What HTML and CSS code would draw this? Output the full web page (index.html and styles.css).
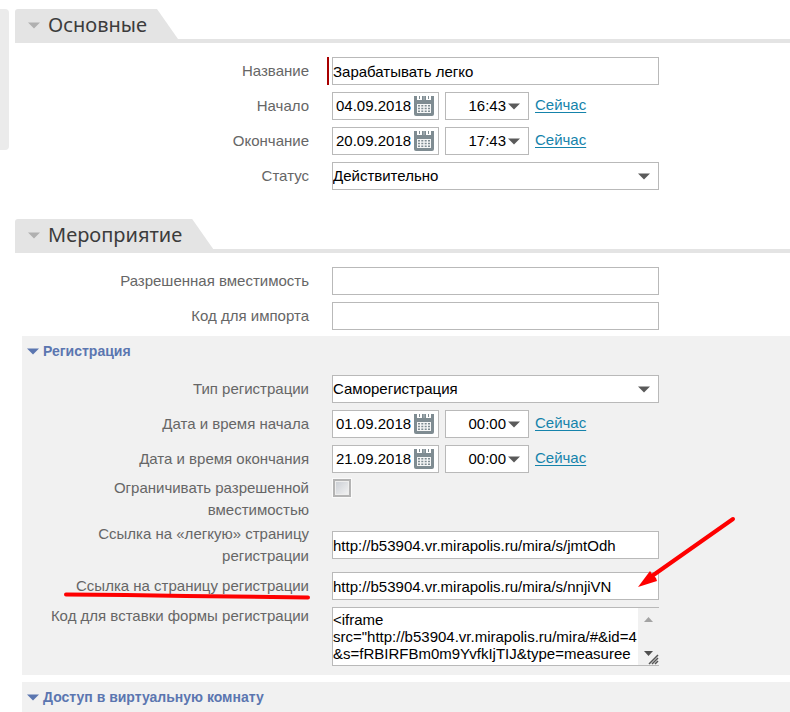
FILE: index.html
```
<!DOCTYPE html>
<html lang="ru">
<head>
<meta charset="utf-8">
<meta name="viewport" content="width=device-width, initial-scale=1">
<title>Мероприятие</title>
<link rel="stylesheet" href="styles.css">
</head>
<body>
<svg class="sprite" aria-hidden="true">
  <symbol id="arrow" viewBox="0 0 12 7"><path d="M0 .5h12L6 6.500z" fill="currentColor"/></symbol>
  <symbol id="calendar" viewBox="0 0 20 20">
    <path d="M0 0h20v18a2 2 0 0 1-2 2H2a2 2 0 0 1-2-2z" fill="#7f8c92"/>
    <path d="M3 0h5v4H3zM12 0h5v4h-5z" fill="#fff"/>
    <path d="M5 0h1v3H5zM14 0h1v3h-1z" fill="#7f8c92"/>
    <path d="M9 0h2v4H9z" fill="#9aa5aa"/>
    <path d="M3 8h14v9H3z" fill="#f6f7f7"/>
    <path d="M4 9h2v1.500H4zM7.300 9h2v1.500h-2zM10.700 9h2v1.500h-2zM14 9h2v1.500h-2zM4 11.800h2v1.500H4zM7.300 11.800h2v1.500h-2zM10.700 11.800h2v1.500h-2zM14 11.800h2v1.500h-2zM4 14.500h2V16H4zM7.300 14.500h2V16h-2zM10.700 14.500h2V16h-2zM14 14.500h2V16h-2z" fill="#7f8c92"/>
  </symbol>
</svg>
<div class="page">
  <aside class="side"></aside>
  <main class="content">
    <section class="section">
      <h2 class="section-head"><button type="button" class="tab"><svg class="arrow"><use href="#arrow"/></svg>Основные</button></h2>
      <div class="rows">
        <div class="row">
          <label for="name">Название</label>
          <div class="field required"><input id="name" class="box" type="text" value="Зарабатывать легко"></div>
        </div>
        <div class="row">
          <label for="start">Начало</label>
          <div class="field moment">
            <span class="box date"><input id="start" type="text" value="04.09.2018"><button type="button" aria-label="Календарь"><svg class="calendar"><use href="#calendar"/></svg></button></span>
            <span class="box time"><input type="text" aria-label="Время" value="16:43"><button type="button" aria-label="Выбрать время"><svg class="arrow"><use href="#arrow"/></svg></button></span>
            <a href="#">Сейчас</a>
          </div>
        </div>
        <div class="row">
          <label for="end">Окончание</label>
          <div class="field moment">
            <span class="box date"><input id="end" type="text" value="20.09.2018"><button type="button" aria-label="Календарь"><svg class="calendar"><use href="#calendar"/></svg></button></span>
            <span class="box time"><input type="text" aria-label="Время" value="17:43"><button type="button" aria-label="Выбрать время"><svg class="arrow"><use href="#arrow"/></svg></button></span>
            <a href="#">Сейчас</a>
          </div>
        </div>
        <div class="row">
          <label for="status">Статус</label>
          <div class="field"><select id="status" class="box"><option>Действительно</option></select><svg class="arrow select-arrow"><use href="#arrow"/></svg></div>
        </div>
      </div>
    </section>

    <section class="section">
      <h2 class="section-head"><button type="button" class="tab"><svg class="arrow"><use href="#arrow"/></svg>Мероприятие</button></h2>
      <div class="rows">
        <div class="row">
          <label for="capacity">Разрешенная вместимость</label>
          <div class="field"><input id="capacity" class="box" type="text"></div>
        </div>
        <div class="row">
          <label for="code">Код для импорта</label>
          <div class="field"><input id="code" class="box" type="text"></div>
        </div>
      </div>

      <div class="panel">
        <h3><button type="button" class="panel-head"><svg class="arrow"><use href="#arrow"/></svg>Регистрация</button></h3>
        <div class="row">
          <label for="type">Тип регистрации</label>
          <div class="field"><select id="type" class="box"><option>Саморегистрация</option></select><svg class="arrow select-arrow"><use href="#arrow"/></svg></div>
        </div>
        <div class="row">
          <label for="reg-start">Дата и время начала</label>
          <div class="field moment">
            <span class="box date"><input id="reg-start" type="text" value="01.09.2018"><button type="button" aria-label="Календарь"><svg class="calendar"><use href="#calendar"/></svg></button></span>
            <span class="box time"><input type="text" aria-label="Время" value="00:00"><button type="button" aria-label="Выбрать время"><svg class="arrow"><use href="#arrow"/></svg></button></span>
            <a href="#">Сейчас</a>
          </div>
        </div>
        <div class="row">
          <label for="reg-end">Дата и время окончания</label>
          <div class="field moment">
            <span class="box date"><input id="reg-end" type="text" value="21.09.2018"><button type="button" aria-label="Календарь"><svg class="calendar"><use href="#calendar"/></svg></button></span>
            <span class="box time"><input type="text" aria-label="Время" value="00:00"><button type="button" aria-label="Выбрать время"><svg class="arrow"><use href="#arrow"/></svg></button></span>
            <a href="#">Сейчас</a>
          </div>
        </div>
        <div class="row tall top">
          <label for="limit">Ограничивать разрешенной вместимостью</label>
          <div class="field"><input id="limit" class="check" type="checkbox"></div>
        </div>
        <div class="row tall">
          <label for="light-link">Ссылка на «легкую» страницу регистрации</label>
          <div class="field"><input id="light-link" class="box" type="text" value="http://b53904.vr.mirapolis.ru/mira/s/jmtOdh"></div>
        </div>
        <div class="row">
          <label for="link" class="marked">Ссылка на страницу регистрации<svg class="underline" viewBox="0 0 246 8" aria-hidden="true"><path d="M2 2.500 62 3l60 1 122 1.500" fill="none" stroke="#fe0000" stroke-width="4" stroke-linecap="round"/></svg></label>
          <div class="field"><input id="link" class="box" type="text" value="http://b53904.vr.mirapolis.ru/mira/s/nnjiVN"><svg class="pointer" viewBox="0 0 98 72" aria-hidden="true"><path d="M95 3 14 60" stroke="#fe0000" stroke-width="4" stroke-linecap="round"/><path d="M0 71 12 55l2 3 4 4 1 3z" fill="#fe0000"/></svg></div>
        </div>
        <div class="row code-row top">
          <label for="embed">Код для вставки формы регистрации</label>
          <div class="field code">
            <textarea id="embed" rows="3">&lt;iframe
src="http://b53904.vr.mirapolis.ru/mira/#&amp;id=4
&amp;s=fRBIRFBm0m9YvfkIjTIJ&amp;type=measuree</textarea>
            <svg class="scrollbar" viewBox="0 0 21 57" aria-hidden="true"><path d="M6 14h9l-4.500-5z" fill="#a3a3a3"/><path d="M6 43h9l-4.500 5z" fill="#505050"/><path d="m11 56 9-9m-6 9 6-6m-3 6 3-3" stroke="#555" stroke-width="1.500"/></svg>
          </div>
        </div>
      </div>

      <div class="panel">
        <h3><button type="button" class="panel-head"><svg class="arrow"><use href="#arrow"/></svg>Доступ в виртуальную комнату</button></h3>
      </div>
    </section>
  </main>
</div>
</body>
</html>
```
FILE: styles.css
```
* { box-sizing: border-box; }

body {
  margin: 0;
  background: #fff;
  color: #000;
  font: 15px/22px "Liberation Sans", Arial, sans-serif;
}

button, input, select, textarea { font: inherit; color: inherit; margin: 0; }
button { border: 0; padding: 0; background: none; cursor: pointer; }
h2, h3 { margin: 0; font-weight: normal; }

.sprite { display: none; }
svg { display: block; }

.page {
  display: flex;
  align-items: flex-start;
  gap: 6px;
  padding-top: 9px;
}

.side {
  flex: 0 0 9px;
  height: 141px;
  background: #ebebeb;
  border-radius: 0 4px 4px 0;
}

.content { flex: 1; min-width: 0; }

.section + .section { margin-top: 26px; }

.section-head {
  display: flex;
  height: 34px;
  border-bottom: 4px solid #e4e4e4;
}

.tab {
  display: flex;
  align-items: center;
  gap: 8px;
  height: 30px;
  padding: 2px 31px 0 13px;
  background: #e4e4e4;
  border-radius: 3px 0 0 0;
  clip-path: polygon(0 0, calc(100% - 21px) 0, 100% 100%, 0 100%);
  color: #3c3c3c;
  font: 20px/26px "Noto Sans", sans-serif;
}

.arrow { width: 12px; height: 7px; color: #5a5a5a; }
.tab .arrow { color: #b0b0b0; }

.rows { padding: 10px 0 0 7px; }

.row {
  display: grid;
  grid-template-columns: 287px minmax(0, 327px);
  column-gap: 23px;
  align-items: center;
  padding: 4px 0 3px;
}

.row label { color: #666; text-align: right; }
.row.tall { padding: 1px 0; }
.row.top { align-items: start; }
.row.code-row { padding-top: 2px; }

.field { position: relative; }

.box {
  display: block;
  width: 100%;
  height: 28px;
  padding: 0;
  border: 1px solid #b9b9b9;
  border-radius: 0;
  background: #fff;
}

select.box { appearance: none; }
.select-arrow { position: absolute; top: 11px; right: 9px; pointer-events: none; }

.required::before {
  content: "";
  position: absolute;
  top: 0;
  bottom: 0;
  left: -5px;
  width: 2px;
  background: #a80000;
}

.moment { display: flex; gap: 6px; }
.moment .box { display: flex; align-items: center; }
.moment input {
  flex: 1;
  min-width: 0;
  padding: 0;
  border: 0;
  background: none;
}
.moment .date { width: 107px; padding: 0 4px 0 3px; }
.moment .time { width: 84px; padding-right: 8px; }
.time input { text-align: right; }
.time button { margin-left: 2px; }
.calendar { width: 20px; height: 20px; }

a { color: #1583ab; line-height: 26px; text-underline-offset: 2px; }

.panel {
  margin: 3px 0 0 7px;
  padding-bottom: 6px;
  background: #f1f1f1;
}
.panel + .panel { margin-top: 7px; }

.panel-head {
  display: flex;
  align-items: center;
  gap: 4px;
  height: 35px;
  padding: 0 5px 5px;
  color: #5b76b0;
  font-size: 14px;
  font-weight: bold;
}
.panel-head .arrow { color: #5b76b0; }

.check {
  appearance: none;
  display: block;
  width: 18px;
  height: 18px;
  margin: 2px 1px;
  border: 2px solid #b4b4b4;
  background: linear-gradient(135deg, #c9cdd3, #f4f4f4);
  box-shadow: inset 0 0 0 1px #eee, 0 0 0 1px #fafafa;
}

.marked { position: relative; }
.underline { position: absolute; right: -1px; bottom: -3px; width: 246px; height: 8px; }
.pointer { position: absolute; z-index: 1; left: 306px; top: -56px; width: 98px; height: 72px; }

.code {
  display: flex;
  height: 59px;
  margin-top: 2px;
  border: 1px solid #b9b9b9;
  border-right: 0;
  background: #fff;
}
.code textarea {
  flex: 1;
  min-width: 0;
  padding: 3px 0 0;
  border: 0;
  background: none;
  line-height: 17px;
  white-space: pre;
  overflow: hidden;
  resize: none;
}
.scrollbar { width: 21px; height: 57px; background: #f1f1f1; }
```
